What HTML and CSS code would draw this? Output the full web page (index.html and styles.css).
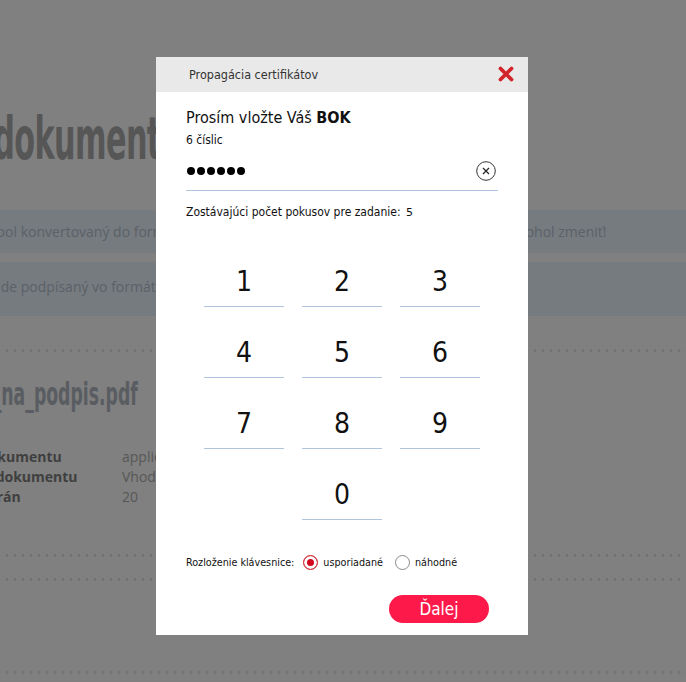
FILE: index.html
```html
<!DOCTYPE html>
<html lang="sk">
<head>
    <meta charset="UTF-8">
    <meta name="viewport" content="width=device-width, initial-scale=1.0">
    <title>Podpis dokumentu</title>
    <link rel="stylesheet" href="styles.css">
</head>
<body>
    <div class="page">
        <h1 class="page-title">Podpis dokumentu</h1>
        <div class="alert alert-convert">Dokument bol konvertovaný do formátu PDF/A, aby sa jeho vzhľad po podpísaní už viac nemohol zmeniť!</div>
        <div class="alert alert-format">Dokument bude podpísaný vo formáte PAdES.</div>
        <div class="dots"></div>
        <h2 class="file-name">Zmluva_na_podpis.pdf</h2>
        <div class="doc-info">
            <span class="label">Druh dokumentu</span><span class="value">application/pdf</span>
            <span class="label">Formát dokumentu</span><span class="value">Vhodný na podpis</span>
            <span class="label">Počet strán</span><span class="value">20</span>
        </div>
        <div class="dots dots-first"></div>
        <div class="dots dots-second"></div>
        <div class="dots dots-third"></div>
    </div>

    <div class="overlay">
        <div class="modal">
            <div class="modal-header">
                <span class="modal-title">Propagácia certifikátov</span>
                <button class="close-btn" type="button" aria-label="Zavrieť">
                    <svg width="16" height="16" viewBox="0 0 16 16">
                        <path d="M2.5 2.5 L13.5 13.5 M13.5 2.5 L2.5 13.5" stroke="#d3232a" stroke-width="3.8" stroke-linecap="round"/>
                    </svg>
                </button>
            </div>
            <div class="modal-body">
                <div class="prompt">Prosím vložte Váš <b>BOK</b></div>
                <div class="hint">6 číslic</div>
                <div class="pin-field">
                    <div class="pin-dots"><span></span><span></span><span></span><span></span><span></span><span></span></div>
                    <button class="clear-btn" type="button" aria-label="Vymazať">
                        <svg width="20" height="20" viewBox="0 0 20 20">
                            <circle cx="10" cy="10" r="9.3" fill="none" stroke="#333" stroke-width="1"/>
                            <path d="M7 7 L13 13 M13 7 L7 13" stroke="#222" stroke-width="1.2"/>
                        </svg>
                    </button>
                </div>
                <div class="attempts">Zostávajúci počet pokusov pre zadanie: <span class="count">5</span></div>
                <div class="keypad">
                    <button type="button">1</button>
                    <button type="button">2</button>
                    <button type="button">3</button>
                    <button type="button">4</button>
                    <button type="button">5</button>
                    <button type="button">6</button>
                    <button type="button">7</button>
                    <button type="button">8</button>
                    <button type="button">9</button>
                    <button type="button" class="zero">0</button>
                </div>
                <div class="layout-row">
                    <span class="layout-label">Rozloženie klávesnice:</span>
                    <label class="radio"><input type="radio" name="layout" checked> usporiadané</label>
                    <label class="radio"><input type="radio" name="layout"> náhodné</label>
                </div>
                <div class="actions">
                    <button class="next-btn" type="button">Ďalej</button>
                </div>
            </div>
        </div>
    </div>
</body>
</html>
```

FILE: styles.css
```css
body {
    margin: 0;
    background-color: #808080;
    font-family: "Open Sans", "DejaVu Sans", sans-serif;
    display: flex;
    justify-content: center;
    overflow: hidden;
    height: 682px;
}
.page {
    width: 1000px;
    flex-shrink: 0;
    padding: 0 0 0 40px;
    box-sizing: border-box;
}
.page-title {
    margin: 106px 0 0 -11px;
    font-family: "Liberation Sans Narrow", "DejaVu Sans Condensed", sans-serif;
    font-size: 58px;
    line-height: 66px;
    font-weight: bold;
    color: #565656;
    transform: scaleX(0.58);
    transform-origin: left;
    letter-spacing: -1px;
    white-space: nowrap;
}
.alert {
    margin: 38px -200px 0 -200px;
    height: 43px;
    line-height: 43px;
    background-color: #767b80;
    color: #5b6167;
    font-size: 14px;
    white-space: nowrap;
}
.alert-convert {
    padding-left: 241px;
}
.alert-format {
    margin-top: 9px;
    padding-left: 228px;
    height: 54px;
    line-height: 50px;
}
.dots {
    margin: 33px -200px 0 -200px;
    height: 3px;
    background-image: radial-gradient(circle, #737373 1.3px, transparent 1.6px);
    background-size: 8px 3px;
}
.file-name {
    margin: 22px 0 0 38px;
    font-family: "Liberation Sans Narrow", "DejaVu Sans Condensed", sans-serif;
    font-size: 32px;
    line-height: 40px;
    font-weight: bold;
    color: #595d61;
    transform: scaleX(0.6);
    transform-origin: left;
    white-space: nowrap;
}
.doc-info {
    margin: 33px 0 0 58px;
    display: grid;
    grid-template-columns: 181px auto;
    font-size: 14px;
    line-height: 20px;
    white-space: nowrap;
}
.doc-info .label {
    font-weight: bold;
    color: #3f3f3f;
}
.doc-info .value {
    color: #575757;
}
.dots-first {
    margin-top: 47px;
}
.dots-second {
    margin-top: 21px;
}
.dots-third {
    margin-top: 90px;
}

/* Modal */
.overlay {
    position: fixed;
    top: 0;
    left: 0;
    right: 0;
    bottom: 0;
}
.modal {
    margin: 57px 0 0 156px;
    width: 372px;
    background-color: #fff;
    font-family: "DejaVu Sans Condensed", "Liberation Sans", sans-serif;
    color: #111;
}
.modal-header {
    height: 35px;
    background-color: #e9e9e9;
    display: flex;
    justify-content: space-between;
    align-items: center;
    padding: 0 14px 0 33px;
}
.modal-title {
    font-size: 12.5px;
    color: #333;
}
.close-btn {
    border: none;
    background: none;
    padding: 0;
    width: 16px;
    height: 16px;
    display: flex;
    margin-top: -1px;
}
.modal-body {
    padding: 15px 30px 12px 30px;
}
.prompt {
    font-size: 16px;
    line-height: 22px;
}
.hint {
    margin-top: 3px;
    font-size: 12px;
    line-height: 16px;
}
.pin-field {
    margin-top: 4px;
    height: 39px;
    box-sizing: border-box;
    border-bottom: 1px solid #b0c4de;
    display: flex;
    justify-content: space-between;
    align-items: center;
    padding: 0 2px 0 1px;
}
.pin-dots {
    display: flex;
    gap: 2px;
}
.pin-dots span {
    width: 8px;
    height: 8px;
    border-radius: 50%;
    background-color: #000;
}
.clear-btn {
    border: none;
    background: none;
    padding: 0;
    display: flex;
}
.attempts {
    margin-top: 13px;
    font-size: 12px;
    line-height: 16px;
}
.attempts .count {
    margin-left: 2px;
    font-family: "DejaVu Sans", sans-serif;
    font-size: 11px;
}
.keypad {
    margin-top: 36px;
    display: grid;
    grid-template-columns: repeat(3, 80px);
    column-gap: 18px;
    row-gap: 21px;
    justify-content: center;
}
.keypad button {
    height: 50px;
    border: none;
    border-bottom: 1px solid #b0c4de;
    background: none;
    font-family: "DejaVu Sans Condensed", "Liberation Sans", sans-serif;
    font-size: 28px;
    color: #111;
    padding: 0;
}
.keypad .zero {
    grid-column: 2;
}
.layout-row {
    margin-top: 32px;
    height: 20px;
    display: flex;
    align-items: center;
    font-size: 10.7px;
}
.layout-label {
    margin-right: 9px;
}
.radio {
    display: flex;
    align-items: center;
    gap: 5px;
    margin-right: 12px;
}
.radio input {
    appearance: none;
    margin: 0;
    width: 15px;
    height: 15px;
    border: 1px solid #8a8a8a;
    border-radius: 50%;
    background-color: #fff;
}
.radio input:checked {
    border-color: #d0343c;
    background-color: #d2061c;
    box-shadow: inset 0 0 0 3px #fff;
}
.actions {
    margin-top: 23px;
    display: flex;
    justify-content: flex-end;
    padding-right: 9px;
}
.next-btn {
    width: 100px;
    height: 28px;
    border: none;
    border-radius: 14px;
    background-color: #fd1a4a;
    color: #fff;
    font-family: "DejaVu Sans Condensed", "Liberation Sans", sans-serif;
    font-size: 17px;
    padding: 0;
}
```
